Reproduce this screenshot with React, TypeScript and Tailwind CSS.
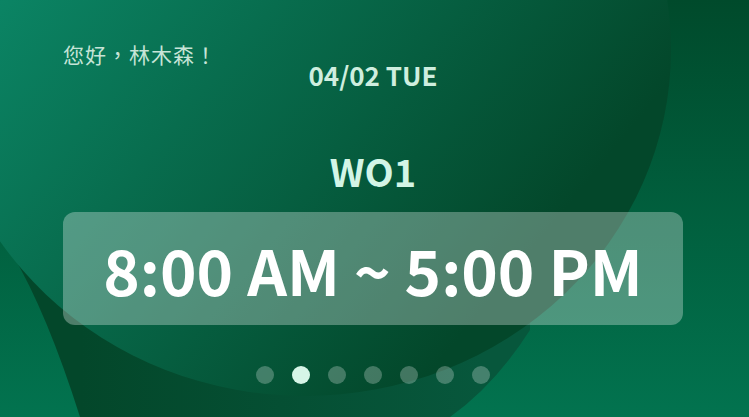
import React from "react";

function Background() {
  return (
    <svg
      className="absolute inset-0"
      width="749"
      height="417"
      viewBox="0 0 749 417"
      aria-hidden="true"
    >
      <defs>
        <linearGradient id="bg" x1="0" y1="0" x2="0" y2="417" gradientUnits="userSpaceOnUse">
          <stop offset="0" stopColor="#004a2b" />
          <stop offset="1" stopColor="#02734f" />
        </linearGradient>
        <linearGradient id="bandB" x1="80" y1="0" x2="480" y2="0" gradientUnits="userSpaceOnUse">
          <stop offset="0" stopColor="#03472a" />
          <stop offset="1" stopColor="#07573c" />
        </linearGradient>
        <linearGradient id="circA" x1="0" y1="0" x2="439" y2="362" gradientUnits="userSpaceOnUse">
          <stop offset="0" stopColor="#0b8464" />
          <stop offset="1" stopColor="#03472a" />
        </linearGradient>
      </defs>
      <rect width="749" height="417" fill="url(#bg)" />
      <path
        d="M0 235 Q 41 294 80 417 L 450 417 Q 495 385 530 330 L 530 0 L 0 0 Z"
        fill="url(#bandB)"
      />
      <ellipse cx="305" cy="50" rx="366" ry="346" fill="url(#circA)" />
    </svg>
  );
}

export default function App() {
  const dots = [0, 1, 2, 3, 4, 5, 6];
  return (
    <div className="relative w-[749px] h-[417px] overflow-hidden font-['Noto_Sans_CJK_TC','Noto_Sans',sans-serif]">
      <Background />
      <div className="relative flex flex-col pl-[63px] pr-[66px]">
        <div className="pt-[46px] text-[21px] leading-[16px] tracking-[1px] text-[#c6e4d7]">
          您好，林木森！
        </div>
        <div className="text-center text-[26px] leading-[26px] font-bold text-[#cfeedf]">
          04/02 TUE
        </div>
        <div className="mt-[64px] text-center text-[38px] leading-[38px] font-bold text-[#d3f5e6]">
          WO1
        </div>
        <div className="mt-[22px] h-[113px] rounded-[12px] bg-white/30 flex items-center justify-center">
          <span className="text-[62px] leading-[62px] font-bold text-white">
            8:00 AM ~ 5:00 PM
          </span>
        </div>
        <div className="mt-[41px] flex justify-center gap-[18px]">
          {dots.map((d) => (
            <div
              key={d}
              className={
                d === 1
                  ? "w-[18px] h-[18px] rounded-full bg-[#d6f5e7]"
                  : "w-[18px] h-[18px] rounded-full bg-white/25"
              }
            />
          ))}
        </div>
      </div>
    </div>
  );
}
